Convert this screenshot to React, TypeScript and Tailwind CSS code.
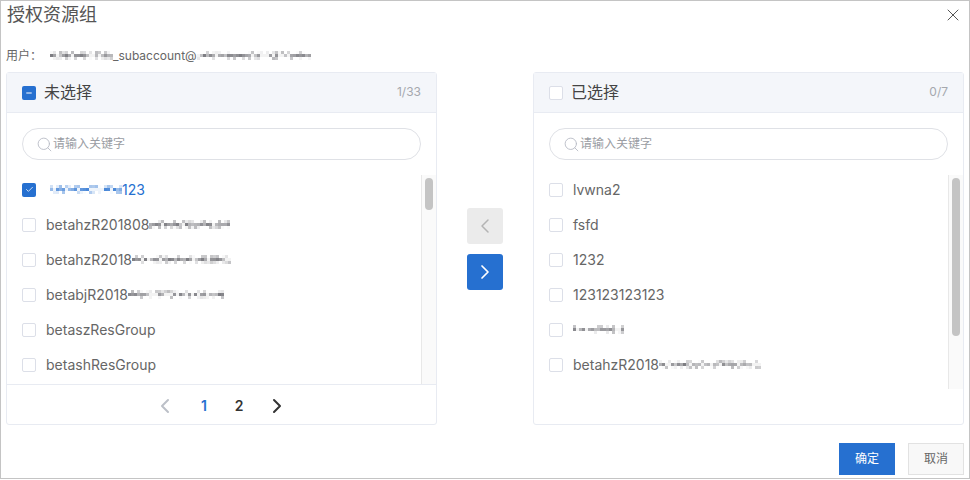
import { Check, ChevronLeft, ChevronRight, Minus, Search, X } from "lucide-react";

const font = "font-['Inter','Noto_Sans_CJK_SC',sans-serif]";

// pixelated (redacted) bits of text: n columns of 3px cells, 3 rows, grey levels from a small seeded generator
function Mosaic({ n, seed, color = "#66666c" }: { n: number; seed: number; color?: string }) {
  let s = seed;
  const next = () => {
    s = (s * 137 + 59) % 1009;
    return s / 1009;
  };
  const rows = [0, 1, 2].map((r) =>
    Array.from({ length: n }, () => {
      const v = next();
      if (r === 1) return v < 0.3 ? 0.08 : 0.15 + v * 0.7;
      return v < 0.5 ? 0 : (v - 0.5) * 0.9;
    }),
  );
  return (
    <span className="inline-flex flex-col">
      {rows.map((row, r) => (
        <span key={r} className="flex h-[3px]">
          {row.map((o, i) => (
            <span key={i} className="block h-[3px] w-[3px]" style={{ backgroundColor: color, opacity: o }} />
          ))}
        </span>
      ))}
    </span>
  );
}

function Box({ state }: { state?: "checked" | "partial" }) {
  if (state) {
    return (
      <span className="flex h-[14px] w-[14px] shrink-0 items-center justify-center rounded-[2px] bg-[#2670d0] text-white">
        {state === "checked" ? <Check size={9} strokeWidth={2} /> : <Minus size={8} strokeWidth={3} />}
      </span>
    );
  }
  return <span className="block h-[14px] w-[14px] shrink-0 rounded-[2px] border border-[#dcdfe8] bg-white" />;
}

function Row({ children, state }: { children: React.ReactNode; state?: "checked" }) {
  return (
    <div className="flex h-[35px] items-center">
      <Box state={state} />
      <div className={`ml-[10px] flex items-center text-[14px] ${state ? "text-[#2670d0]" : "text-[#666]"}`}>{children}</div>
    </div>
  );
}

function Panel({
  title,
  count,
  state,
  children,
  thumb,
  trackH,
  footer,
}: {
  title: string;
  count: string;
  state?: "partial";
  children: React.ReactNode;
  thumb: string;
  trackH: string;
  footer?: React.ReactNode;
}) {
  return (
    <div className="flex h-[353px] w-[431px] flex-col rounded-[3px] border border-[#e8ebf2]">
      <div className="flex h-[40px] shrink-0 items-center justify-between border-b border-[#e8ebf2] bg-[#f4f6fa] px-[15px]">
        <div className="flex items-center gap-[8px]">
          <Box state={state} />
          <span className="pb-[2px] text-[16px] text-[#444]">{title}</span>
        </div>
        <span className="pb-[2px] text-[12px] text-[#a5a8ae]">{count}</span>
      </div>
      <div className="px-[15px] pt-[15px]">
        <div className="flex h-[32px] items-center rounded-full border border-[#dfe1e6] pl-[13px]">
          <Search size={17} strokeWidth={1.3} className="text-[#b9bdc6]" />
          <span className="text-[12px] text-[#9a9da3]">请输入关键字</span>
        </div>
      </div>
      <div className={`mt-[15px] flex ${trackH} overflow-hidden`}>
        <div className="-mt-[3px] flex-1 pl-[15px]">{children}</div>
        <div className="w-[15px] shrink-0 border-l border-[#e8e8e8] bg-[#fafafa] px-[3px] pt-[3px]">
          <div className={`${thumb} w-[8px] rounded-full bg-[#c4c4c4]`} />
        </div>
      </div>
      {footer}
    </div>
  );
}

export default function App() {
  return (
    <div className={`${font} flex h-[479px] w-[970px] flex-col border border-[#c4c4c4] bg-white`}>
      <div className="relative flex h-[54px] shrink-0 items-start pl-[6px]">
        <h1 className="text-[18px] font-normal leading-[28px] text-[#555]">授权资源组</h1>
        <X size={20} strokeWidth={1.2} className="absolute right-[6px] top-[4px] text-[#555]" />
      </div>
      <div className="flex h-[17px] shrink-0 items-start pl-[5px] text-[12px] leading-[1px] text-[#666]">
        <div className="flex h-[1px] items-center">
          <span className="w-[44px]">用户：</span>
          <Mosaic n={21} seed={11} />
          <span>_subaccount@</span>
          <Mosaic n={38} seed={47} />
        </div>
      </div>
      <div className="flex shrink-0 items-start pl-[5px]">
        <Panel
          title="未选择"
          count="1/33"
          state="partial"
          thumb="h-[32px]"
          trackH="h-[209px]"
          footer={
            <div className="flex flex-1 items-center justify-center border-t border-[#e8ebf2] pr-[2px] pt-[2px]">
              <ChevronLeft size={24} strokeWidth={2} className="text-[#bcc0c8]" />
              <span className="ml-[10px] w-[35px] text-center text-[14px] font-semibold text-[#2670d0]">1</span>
              <span className="w-[35px] text-center text-[14px] font-semibold text-[#333]">2</span>
              <ChevronRight size={24} strokeWidth={2} className="ml-[8px] text-[#333]" />
            </div>
          }
        >
          <Row state="checked">
            <span className="ml-[4px] flex items-center">
              <Mosaic n={24} seed={5} color="#2670d0" />
              123
            </span>
          </Row>
          <Row>
            betahzR201808
            <Mosaic n={27} seed={83} />
          </Row>
          <Row>
            betahzR2018
            <Mosaic n={33} seed={121} />
          </Row>
          <Row>
            betabjR2018
            <Mosaic n={32} seed={201} />
          </Row>
          <Row>betaszResGroup</Row>
          <Row>betashResGroup</Row>
        </Panel>
        <div className="flex w-[96px] shrink-0 flex-col items-center gap-[10px] pt-[136px]">
          <div className="flex h-[36px] w-[36px] items-center justify-center rounded-[3px] bg-[#ebebeb]">
            <ChevronLeft size={24} strokeWidth={1.5} className="text-[#b4b4b4]" />
          </div>
          <div className="flex h-[36px] w-[36px] items-center justify-center rounded-[3px] bg-[#2670d0]">
            <ChevronRight size={24} strokeWidth={1.7} className="text-white" />
          </div>
        </div>
        <Panel title="已选择" count="0/7" thumb="h-[158px]" trackH="h-[214px]">
          <Row>lvwna2</Row>
          <Row>fsfd</Row>
          <Row>1232</Row>
          <Row>123123123123</Row>
          <Row>
            <Mosaic n={17} seed={301} />
          </Row>
          <Row>
            betahzR2018
            <Mosaic n={34} seed={409} />
          </Row>
        </Panel>
      </div>
      <div className="flex flex-1 items-start justify-end gap-[13px] pr-[5px] pt-[18px]">
        <button className="flex h-[32px] w-[56px] items-center justify-center bg-[#2670d0] text-[12px] text-white">确定</button>
        <button className="flex h-[32px] w-[56px] items-center justify-center border border-[#e2e2e2] bg-[#f8f8f8] text-[12px] text-[#666]">取消</button>
      </div>
    </div>
  );
}
